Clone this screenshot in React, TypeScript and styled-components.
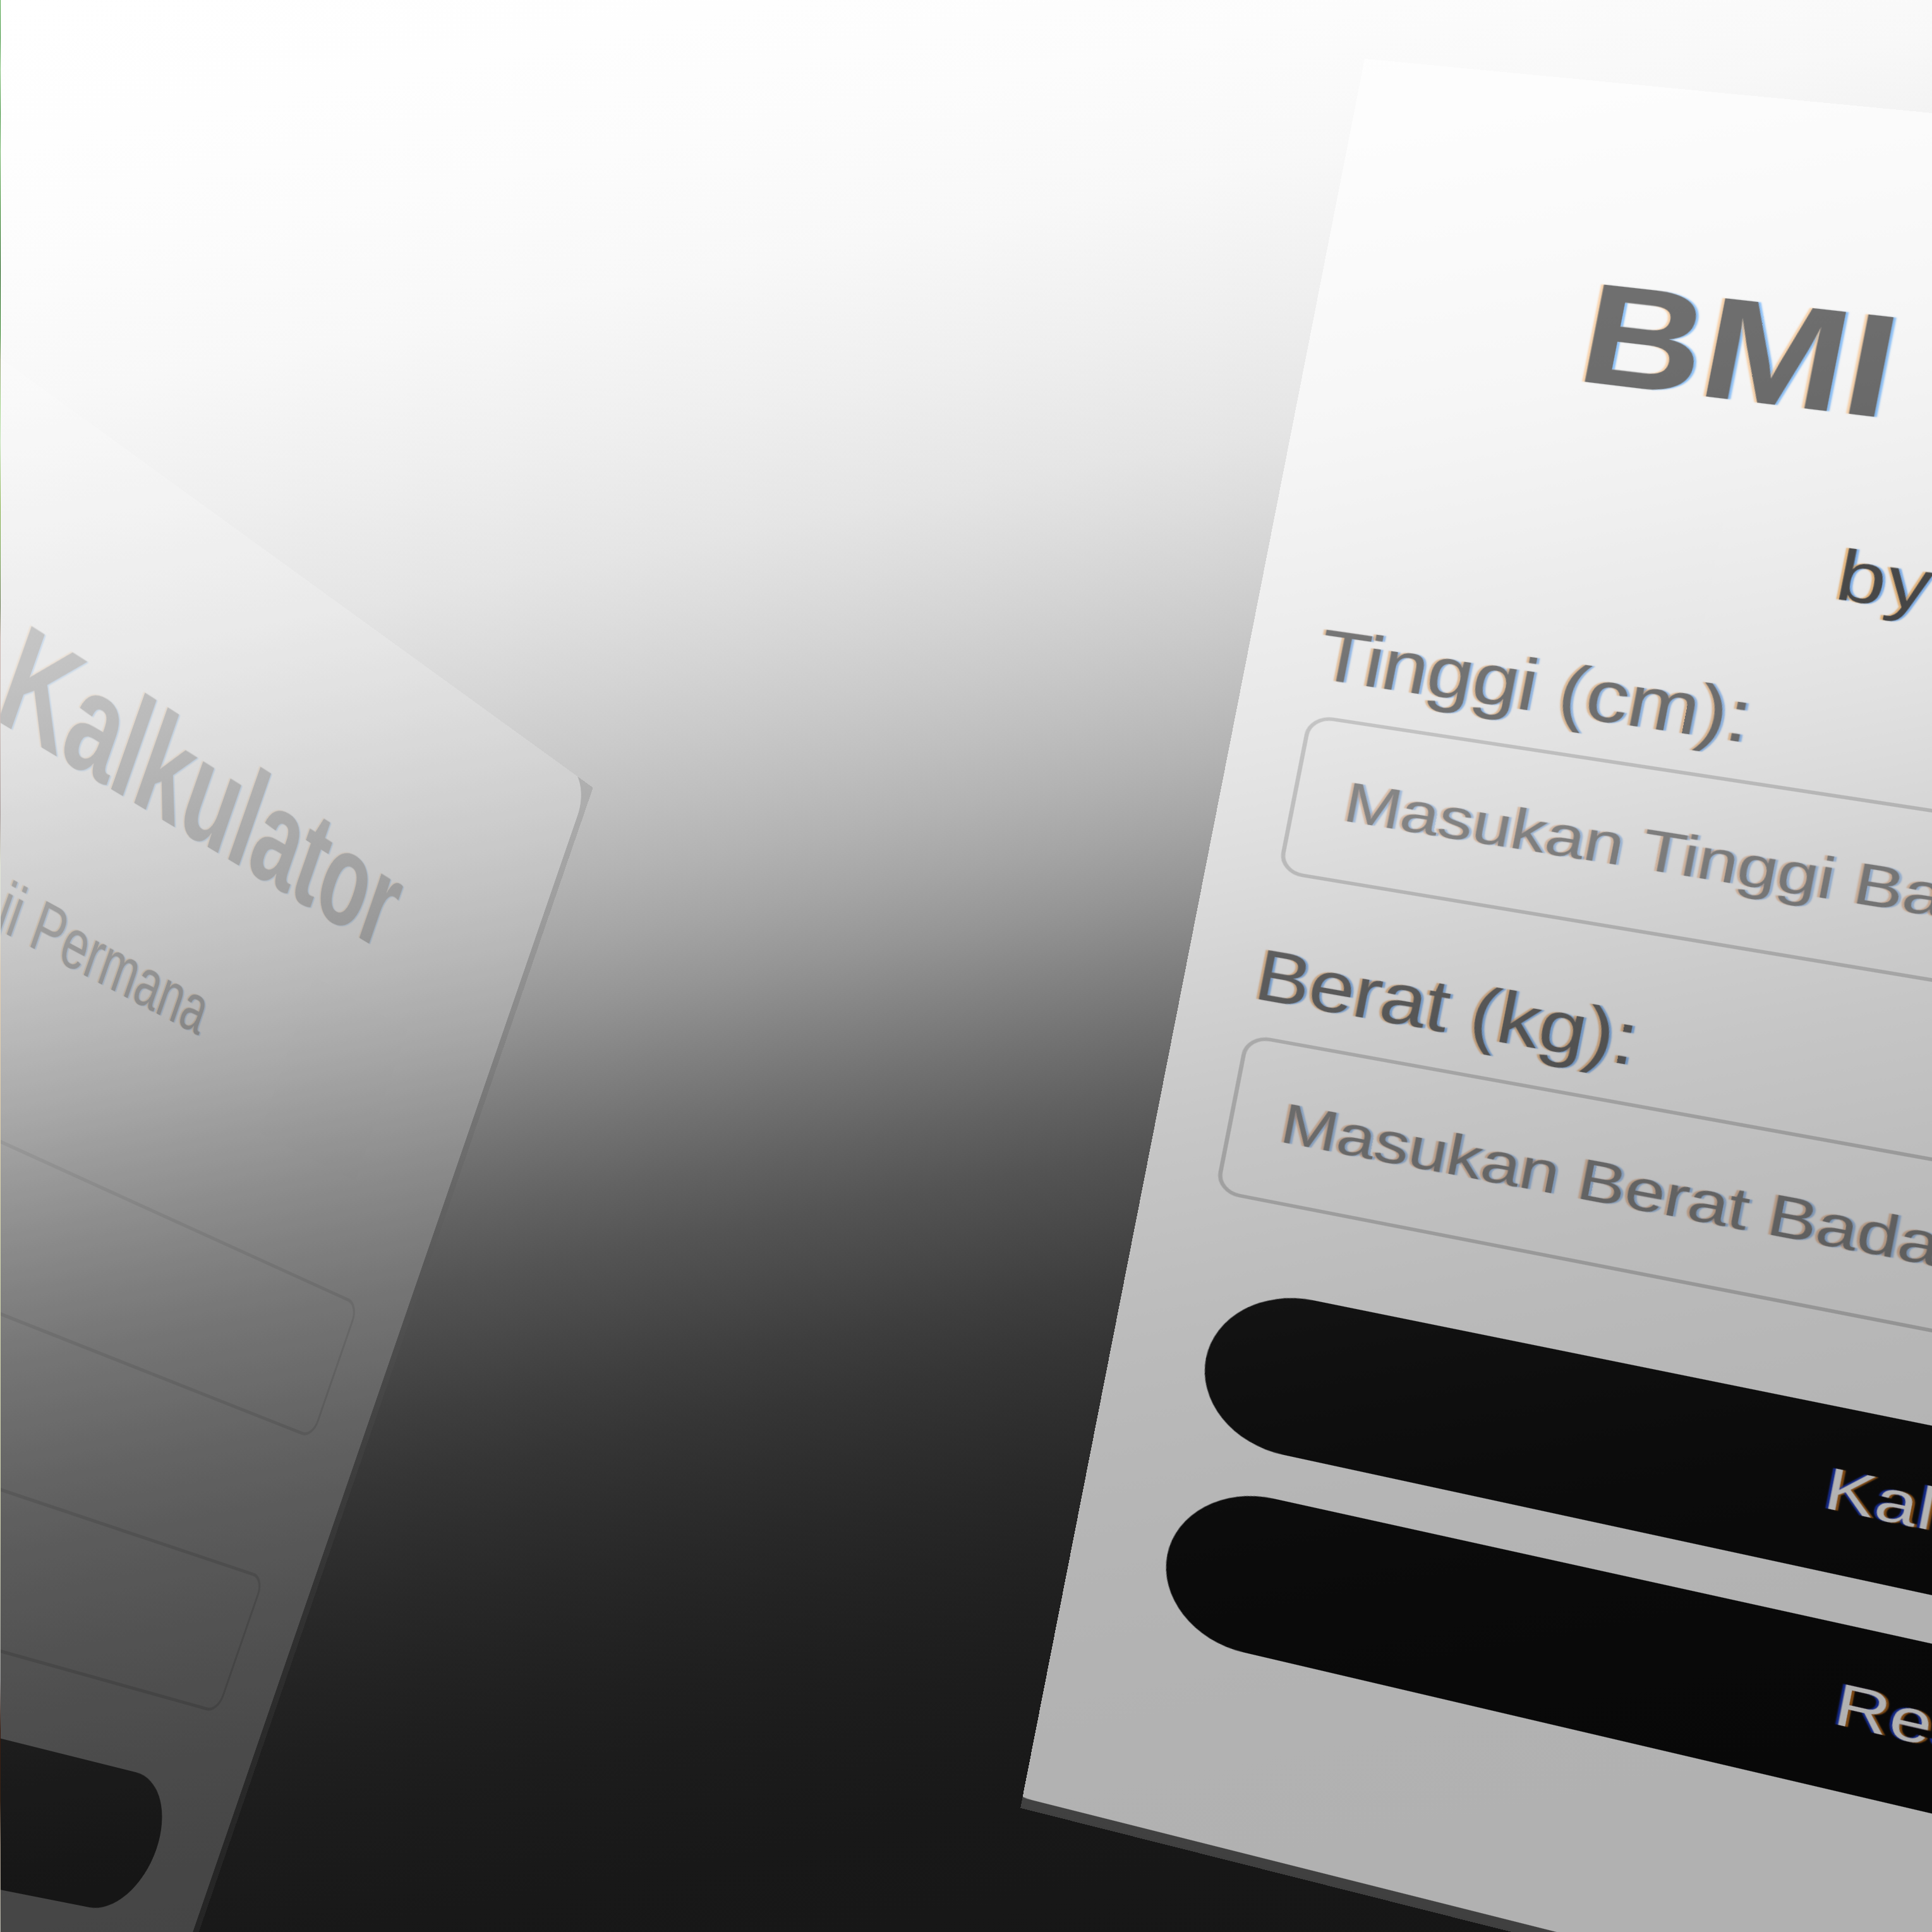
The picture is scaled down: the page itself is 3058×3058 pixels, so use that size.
import React from "react";
import styled, { createGlobalStyle } from "styled-components";

const GlobalStyle = createGlobalStyle`
  html, body { margin: 0; padding: 0; background: #161616; }
  *, *::before, *::after { box-sizing: border-box; }
`;

/* Cards are laid out at DETAIL times their design size, so they stay sharp once projected. */
const DETAIL = 6;
const u = (n: number) => `${n * DETAIL}px`;

type Projection = {
  x: [number, number, number];
  y: [number, number, number];
  w: [number, number, number];
};

/* Plane-to-screen mapping: each row holds the factors of (across, down, 1). */
const project = ({ x, y, w }: Projection) => {
  const s = w[2];
  const a = (v: number) => v / s / DETAIL;
  return `matrix3d(${a(x[0])}, ${a(y[0])}, 0, ${a(w[0])}, ${a(x[1])}, ${a(y[1])}, 0, ${a(w[1])}, 0, 0, 1, 0, ${x[2] / s}, ${y[2] / s}, 0, 1)`;
};

const nearPlane: Projection = {
  x: [7.0146, -1.285, 2160],
  y: [0.72, 6.53, 93],
  w: [-0.0004283, 0, 1],
};

const farPlane: Projection = {
  x: [3.7651, -1.9096, -333.9],
  y: [3.19215, 5.3447, 167.8],
  w: [0.0008185, -0.00005, 0.72335],
};

const Stage = styled.main`
  display: grid;
  width: 3058px;
  height: 3058px;
  overflow: hidden;
  font-family: "Liberation Sans", Arial, sans-serif;
  background: linear-gradient(
    169.2deg,
    rgb(255, 255, 255) 0px,
    rgb(254, 254, 254) 230px,
    rgb(252, 252, 252) 420px,
    rgb(248, 248, 248) 630px,
    rgb(239, 239, 239) 851px,
    rgb(229, 229, 229) 1047px,
    rgb(221, 221, 221) 1145px,
    rgb(212, 212, 212) 1243px,
    rgb(202, 202, 202) 1341px,
    rgb(191, 191, 191) 1439px,
    rgb(179, 179, 179) 1537px,
    rgb(165, 165, 165) 1635px,
    rgb(149, 149, 149) 1733px,
    rgb(131, 131, 131) 1832px,
    rgb(114, 114, 114) 1930px,
    rgb(98, 98, 98) 2028px,
    rgb(84, 84, 84) 2126px,
    rgb(73, 73, 73) 2224px,
    rgb(62, 62, 62) 2322px,
    rgb(53, 53, 53) 2420px,
    rgb(46, 46, 46) 2518px,
    rgb(40, 40, 40) 2616px,
    rgb(35, 35, 35) 2715px,
    rgb(31, 31, 31) 2813px,
    rgb(28, 28, 28) 2911px,
    rgb(26, 26, 26) 3009px,
    rgb(24, 24, 24) 3107px,
    rgb(23, 23, 23) 3262px,
    rgb(22, 22, 22) 3577px
  );

  & > * {
    grid-area: 1 / 1;
  }
`;

const Sliver = styled.div`
  width: 1px;
  height: 3058px;
  z-index: 1;
  background: linear-gradient(
    #5fae58 0px,
    #3f943c 60px,
    #8cc684 110px,
    #3c9038 180px,
    #7dbb74 240px,
    #3f8d35 330px,
    #1f5f1c 430px,
    #3a8a30 530px,
    #9aa77c 570px,
    #a3d48a 640px,
    #c6e4bb 700px,
    #8cb552 800px,
    #7fa85c 880px,
    #6f8059 960px,
    #c9b4ae 1010px,
    #cdbfbb 1150px,
    #a99d9c 1290px,
    #e2e6d6 1370px,
    #dfe3dc 1450px,
    #e2cdb2 1550px,
    #e0cfae 1750px,
    #d3d6ae 2000px,
    #cfd0b0 2400px,
    #9c9c9c 2660px,
    #3c1c10 2740px,
    #3a2415 2850px,
    #9a8c7c 2920px,
    #b9b9ae 3058px
  );
`;

const Sheet = styled.section<{ $plane: Projection; $opacity: number }>`
  display: flex;
  width: ${u(338)};
  height: ${u(424)};
  overflow: hidden;
  background: #545454;
  opacity: ${(p) => p.$opacity};
  transform-origin: 0 0;
  transform: ${(p) => project(p.$plane)};
`;

const Panel = styled.div`
  display: flex;
  flex: none;
  flex-direction: column;
  width: ${u(343.5)};
  height: ${u(422.5)};
  margin: ${u(-1)} 0 0 ${u(-8)};
  padding: ${u(42.1)} ${u(7.5)} 0 ${u(8)};
  border-radius: ${u(10)};
  background: #fff;
  white-space: nowrap;
`;

const Title = styled.h1`
  margin: 0 0 ${u(20.8)};
  font-size: ${u(32)};
  line-height: ${u(36)};
  font-weight: 700;
  letter-spacing: ${u(-0.2)};
  word-spacing: ${u(2.6)};
  text-align: center;
  color: #303030;
  text-shadow: ${u(-0.5)} 0 ${u(0.3)} rgba(255, 160, 60, 0.6), ${u(0.5)} 0 ${u(0.3)} rgba(30, 140, 255, 0.7);
  transform: scaleY(1.04);
  transform-origin: 0 ${u(29.1)};
`;

const Author = styled.p`
  margin: 0 0 ${u(17.2)};
  font-size: ${u(16)};
  line-height: ${u(18)};
  letter-spacing: ${u(0.09)};
  text-align: center;
  color: #0c0c0c;
  text-shadow: ${u(-0.5)} 0 ${u(0.25)} rgba(240, 140, 20, 0.7), ${u(0.5)} 0 ${u(0.25)} rgba(30, 130, 250, 0.7);
  transform: scaleY(1.03);
  transform-origin: 0 ${u(14.5)};
`;

const Label = styled.label`
  margin: 0 0 ${u(5)} ${u(14.1)};
  font-size: ${u(16)};
  line-height: ${u(18)};
  letter-spacing: ${u(-0.1)};
  color: #4c4c4c;
  text-shadow: ${u(-0.5)} 0 ${u(0.25)} rgba(230, 140, 50, 0.6), ${u(0.5)} 0 ${u(0.25)} rgba(40, 130, 240, 0.6);
  transform: scaleY(1.07);
  transform-origin: 0 ${u(14.5)};
`;

const Field = styled.div`
  display: flex;
  align-items: center;
  width: ${u(300.8)};
  height: ${u(38.4)};
  margin: 0 0 ${u(15.6)} ${u(14.2)};
  padding: 0 ${u(9.5)};
  border: ${u(0.85)} solid #cacaca;
  border-radius: ${u(5)};
  font-size: ${u(13.333)};
  letter-spacing: ${u(-0.04)};
  color: #757575;
  text-shadow: ${u(-0.5)} 0 ${u(0.25)} rgba(225, 130, 60, 0.45), ${u(0.5)} 0 ${u(0.25)} rgba(50, 130, 230, 0.45);
`;

const Actions = styled.div`
  display: flex;
  flex-direction: column;
  gap: ${u(10.5)};
  width: ${u(290.4)};
  margin: ${u(4.7)} 0 0 ${u(18.8)};
`;

const Button = styled.button`
  height: ${u(36.8)};
  padding: 0;
  border: 0;
  border-radius: ${u(18.4)};
  background: #000;
  color: #fff;
  font-family: inherit;
  font-size: ${u(13.333)};
  letter-spacing: ${u(0.12)};
  text-shadow: ${u(-0.5)} 0 ${u(0.2)} rgba(20, 60, 240, 0.8), ${u(0.5)} 0 ${u(0.2)} rgba(220, 120, 20, 0.8);

  &:last-child {
    padding: 0 ${u(0.9)} ${u(1.2)} 0;
  }
`;

function Card({ plane, opacity }: { plane: Projection; opacity: number }) {
  return (
    <Sheet $plane={plane} $opacity={opacity}>
      <Panel>
        <Title>BMI Kalkulator</Title>
        <Author>by: Aji Permana</Author>
        <Label>Tinggi (cm):</Label>
        <Field>Masukan Tinggi Badan</Field>
        <Label>Berat (kg):</Label>
        <Field>Masukan Berat Badan</Field>
        <Actions>
          <Button>Kalkulasi</Button>
          <Button>Reset</Button>
        </Actions>
      </Panel>
    </Sheet>
  );
}

export default function App() {
  return (
    <>
      <GlobalStyle />
      <Stage>
        <Card plane={farPlane} opacity={0.19} />
        <Card plane={nearPlane} opacity={0.664} />
        <Sliver />
      </Stage>
    </>
  );
}
